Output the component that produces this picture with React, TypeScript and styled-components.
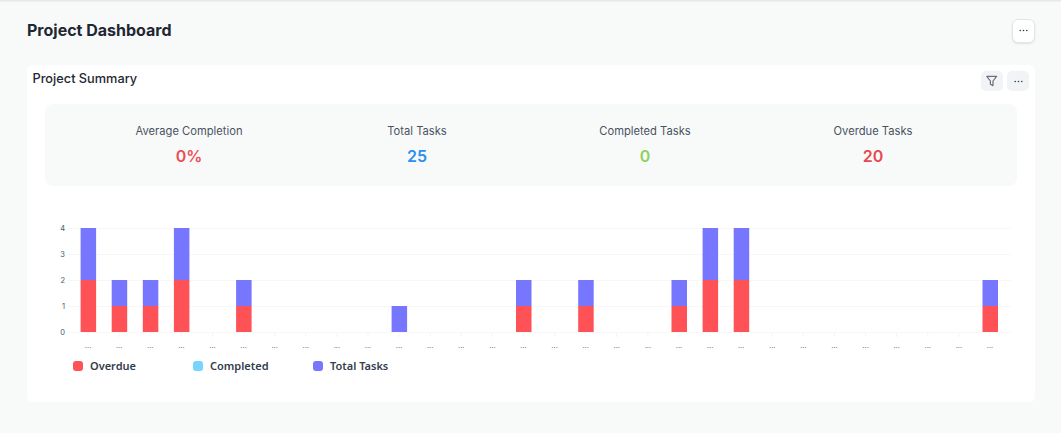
import React from "react";
import styled, { createGlobalStyle } from "styled-components";

const Global = createGlobalStyle`
  html, body { margin: 0; padding: 0; background: #f8fafa; }
  body { font-family: Inter, "Liberation Sans", sans-serif; }
`;

const Page = styled.div`
  width: 1061px;
  height: 433px;
  box-sizing: border-box;
  overflow: hidden;
  background: #f8fafa;
  border-top: 1px solid #e6e7e8;
  box-shadow: inset 0 1px 1px #f0f1f1;
  padding: 0 26px 0 27px;
`;

const Header = styled.header`
  display: flex;
  align-items: center;
  justify-content: space-between;
  height: 64px;
`;

const Title = styled.h1`
  margin: 0 0 7px;
  font-size: 16px;
  line-height: 20px;
  font-weight: 700;
  color: #1f2733;
`;

const RoundButton = styled.button`
  width: 23px;
  height: 24px;
  margin-top: -5px;
  padding: 0;
  display: flex;
  align-items: center;
  justify-content: center;
  background: #fff;
  border: 1px solid #e4e5e7;
  border-radius: 6px;
  box-shadow: 0 1px 2px rgba(0, 0, 0, 0.1);
`;

const Card = styled.section`
  width: 1008px;
  height: 337px;
  box-sizing: border-box;
  background: #fff;
  border-radius: 6px;
  padding: 0 18px;
`;

const CardTop = styled.div`
  display: flex;
  justify-content: space-between;
  height: 39px;
  margin: 0 -12px;
  padding-top: 6px;
  box-sizing: border-box;
`;

const CardTitle = styled.h2`
  margin: 0 0 0 -0.5px;
  font-size: 12.75px;
  line-height: 16px;
  font-weight: 500;
  color: #1f2733;
`;

const CardActions = styled.div`
  display: flex;
  gap: 4px;
`;

const GreyButton = styled.button`
  width: 22px;
  height: 20px;
  padding: 0;
  display: flex;
  align-items: center;
  justify-content: center;
  background: #f2f3f5;
  border: none;
  border-radius: 5px;
`;

const Summary = styled.div`
  display: grid;
  grid-template-columns: repeat(4, 228px);
  width: 972px;
  height: 82px;
  box-sizing: border-box;
  padding: 20px 30px 0;
  background: #f8fafa;
  border-radius: 8px;
`;

const Stat = styled.div`
  display: flex;
  flex-direction: column;
  align-items: center;
  gap: 7px;
`;

const StatLabel = styled.div`
  font-size: 11.2px;
  line-height: 14px;
  color: #4a5361;
`;

const StatValue = styled.div<{ $color: string }>`
  font-size: 16px;
  line-height: 22px;
  font-weight: 600;
  color: ${(p) => p.$color};
`;

const Chart = styled.svg`
  display: block;
  width: 972px;
  height: 140px;
  margin-top: 30px;
`;

const Legend = styled.div`
  display: flex;
  padding-left: 28px;
  margin-top: 3px;
`;

const LegendItem = styled.div`
  display: flex;
  align-items: center;
  gap: 7px;
  width: 120px;
  font-family: "Noto Sans", sans-serif;
  font-size: 11px;
  line-height: 14px;
  font-weight: 600;
  color: #333d4c;
`;

const Swatch = styled.span<{ $color: string }>`
  width: 10px;
  height: 10px;
  border-radius: 3px;
  background: ${(p) => p.$color};
`;

const Dots = () => (
  <svg width="9" height="3" viewBox="0 0 9 3">
    <circle cx="1.2" cy="1.5" r="0.8" fill="#333b47" />
    <circle cx="4.5" cy="1.5" r="0.8" fill="#333b47" />
    <circle cx="7.8" cy="1.5" r="0.8" fill="#333b47" />
  </svg>
);

const Funnel = () => (
  <svg width="12" height="12" viewBox="0 0 12 12" fill="none" stroke="#6a707b" strokeWidth="1.2" strokeLinejoin="round">
    <path d="M0.8 1.4h9.8L7 6v4.6L4.4 9.2V6z" />
  </svg>
);

const data: Record<number, [number, number]> = {
  0: [2, 2], 1: [1, 1], 2: [1, 1], 3: [2, 2], 5: [1, 1], 10: [0, 1],
  14: [1, 1], 16: [1, 1], 19: [1, 1], 20: [2, 2], 21: [2, 2], 29: [1, 1],
};

const OX = 45;
const OY = 216;
const toX = (i: number) => 88.1 - OX + i * 31.1;
const toY = (v: number) => 332 - OY - v * 26;
const stats = [
  ["Average Completion", "0%", "#ee4d55"],
  ["Total Tasks", "25", "#2b90ee"],
  ["Completed Tasks", "0", "#8dd35a"],
  ["Overdue Tasks", "20", "#e9484f"],
];
const legend = [["Overdue", "#ff5257"], ["Completed", "#78d3fd"], ["Total Tasks", "#7676fe"]];

export default function App() {
  return (
    <Page>
      <Global />
      <Header>
        <Title>Project Dashboard</Title>
        <RoundButton aria-label="More"><Dots /></RoundButton>
      </Header>
      <Card>
        <CardTop>
          <CardTitle>Project Summary</CardTitle>
          <CardActions>
            <GreyButton aria-label="Filter"><Funnel /></GreyButton>
            <GreyButton aria-label="More"><Dots /></GreyButton>
          </CardActions>
        </CardTop>
        <Summary>
          {stats.map(([l, v, c]) => (
            <Stat key={l}>
              <StatLabel>{l}</StatLabel>
              <StatValue $color={c}>{v}</StatValue>
            </Stat>
          ))}
        </Summary>
        <Chart viewBox="0 0 972 140">
          {[0, 1, 2, 3, 4].map((v) => (
            <g key={v}>
              <line x1={23} x2={966} y1={toY(v) + 0.5} y2={toY(v) + 0.5} stroke="#f7f7f8" />
              <text x={20} y={toY(v) + 3} textAnchor="end" fontSize="7.5" fontFamily="Inter, sans-serif" fill="#4a5a66">{v}</text>
            </g>
          ))}
          {Array.from({ length: 30 }, (_, i) => (
            <g key={i}>
              <line x1={toX(i)} x2={toX(i)} y1={toY(0) + 1} y2={toY(0) + 5} stroke="#f3f3f4" />
              <text x={toX(i)} y={toY(0) + 16} textAnchor="middle" fontSize="7.5" fontFamily="Inter, sans-serif" fill="#5d6b80">...</text>
            </g>
          ))}
          {Object.entries(data).map(([k, [red, blue]]) => {
            const i = Number(k);
            const x = toX(i) - 7.5;
            return (
              <g key={k}>
                {red > 0 && <rect x={x} y={toY(red)} width={15.5} height={red * 26} fill="#ff5257" />}
                <rect x={x} y={toY(red + blue)} width={15.5} height={blue * 26} fill="#7676fe" />
              </g>
            );
          })}
        </Chart>
        <Legend>
          {legend.map(([l, c]) => (
            <LegendItem key={l}>
              <Swatch $color={c} />
              {l}
            </LegendItem>
          ))}
        </Legend>
      </Card>
    </Page>
  );
}
